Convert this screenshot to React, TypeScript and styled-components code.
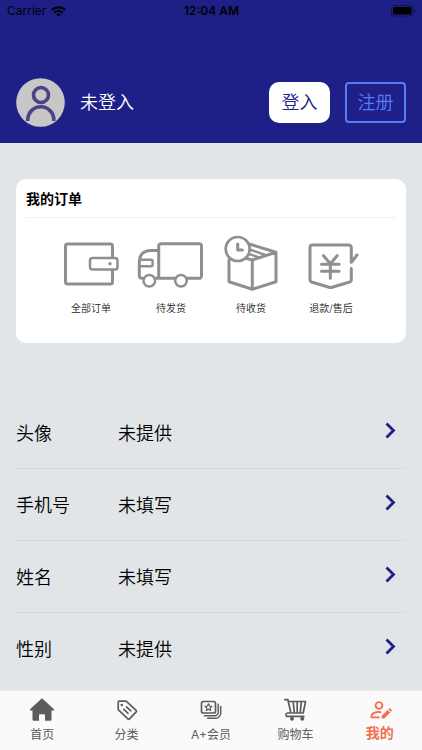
import React from "react";
import styled, { createGlobalStyle } from "styled-components";

const color = {
  navy: "#1e2088",
  link: "#5b7cf7",
  page: "#e1e5e8",
  line: "#d7dadd",
  icon: "#8f8f8f",
  tab: "#5c5c5c",
  accent: "#f56d4e",
};

const GlobalStyle = createGlobalStyle`
  *, *::before, *::after { box-sizing: border-box; }
  body {
    margin: 0;
    background: ${color.page};
    color: #000;
    font-family: Inter, "Noto Sans CJK SC", sans-serif;
    font-weight: 350;
  }
  button { font-family: inherit; font-weight: inherit; }
`;

const Screen = styled.div`
  display: flex;
  flex-direction: column;
  height: 100vh;
`;

const Header = styled.header`
  flex: none;
  background: ${color.navy};
  padding-bottom: 16px;
`;

const StatusBar = styled.div`
  display: grid;
  grid-template-columns: 1fr auto 1fr;
  align-items: center;
  height: 22px;
  padding: 0 6px 0 7px;
  font-size: 12px;
  font-weight: 400;
  line-height: 22px;
`;

const Carrier = styled.span`
  display: flex;
  align-items: center;
  gap: 5px;
`;

const Clock = styled.time`
  font-weight: 600;
`;

const Battery = styled.span`
  display: flex;
  justify-content: flex-end;
`;

const Profile = styled.div`
  display: flex;
  align-items: center;
  gap: 15px;
  margin-top: 56px;
  padding: 0 16px;
`;

const UserName = styled.h1`
  flex: 1;
  margin: 0;
  color: #fff;
  font-size: 18px;
  font-weight: 350;
  line-height: 24px;
`;

const AuthButton = styled.button<{ $outlined?: boolean }>`
  width: 61px;
  height: 41px;
  padding: 0;
  border: 2px solid ${(p) => (p.$outlined ? color.link : "#fff")};
  border-radius: ${(p) => (p.$outlined ? 4 : 10)}px;
  background: ${(p) => (p.$outlined ? "transparent" : "#fff")};
  color: ${(p) => (p.$outlined ? color.link : color.navy)};
  font-size: 18px;
  line-height: 24px;
`;

const Content = styled.main`
  flex: 1;
  min-height: 0;
  overflow-y: auto;
  padding: 36px 16px 0;
`;

const Card = styled.section`
  padding: 8px 10px 27px;
  border-radius: 10px;
  background: #fff;
`;

const CardTitle = styled.h2`
  margin: 0;
  padding-bottom: 6px;
  border-bottom: 1px solid #f0f0f0;
  font-size: 14px;
  font-weight: 700;
  line-height: 24px;
`;

const Orders = styled.div`
  display: grid;
  grid-template-columns: repeat(4, 80px);
  justify-content: center;
  padding-top: 14px;
`;

const OrderButton = styled.button`
  display: flex;
  flex-direction: column;
  align-items: center;
  gap: 8px;
  padding: 0;
  border: 0;
  background: none;
  color: #222;
  font-size: 10px;
  line-height: 16px;
`;

const Details = styled.div`
  margin-top: 54px;
`;

const DetailRow = styled.button`
  display: flex;
  align-items: center;
  width: 100%;
  height: 72px;
  padding: 2px 10px 0 0;
  border: 0;
  border-bottom: 1px solid ${color.line};
  background: none;
  color: #000;
  font-size: 18px;
  line-height: 24px;
  text-align: left;

  &:last-child { border-bottom-color: transparent; }
`;

const DetailName = styled.span`
  width: 102px;
`;

const DetailValue = styled.span`
  flex: 1;
`;

const ChevronBox = styled.span`
  display: flex;
  padding-bottom: 6px;
`;

const TabBar = styled.nav`
  flex: none;
  display: grid;
  grid-template-columns: repeat(5, 1fr);
  height: 60px;
  border-top: 1px solid #ececee;
  background: #fafafa;
`;

const Tab = styled.a<{ $active?: boolean }>`
  display: flex;
  flex-direction: column;
  align-items: center;
  gap: 2px;
  padding-top: 6px;
  color: ${(p) => (p.$active ? color.accent : color.tab)};
  font-size: ${(p) => (p.$active ? 14 : 12)}px;
  font-weight: ${(p) => (p.$active ? 700 : 400)};
  line-height: ${(p) => (p.$active ? 16 : 20)}px;
  text-decoration: none;
`;

function WifiIcon() {
  return (
    <svg width="15" height="11" viewBox="0 0 15 11" fill="none" stroke="#000" aria-hidden="true">
      <path d="M.8 4.1a9.7 9.7 0 0 1 13.4 0" strokeWidth="2.1" />
      <path d="M3.3 6.7a6 6 0 0 1 8.4 0" strokeWidth="1.9" />
      <path d="M7.5 10.6 5.2 8.4a3.2 3.2 0 0 1 4.6 0z" fill="#000" stroke="none" />
    </svg>
  );
}

function BatteryIcon() {
  return (
    <svg width="25" height="12" viewBox="0 0 25 12" aria-hidden="true">
      <rect x=".5" y=".5" width="21.5" height="10.5" rx="3" fill="none" stroke="#000" strokeOpacity=".4" />
      <rect x="2" y="2" width="18.5" height="7.5" rx="1.6" />
      <path d="M23.3 3.8c1.6.6 1.6 3.4 0 4z" fillOpacity=".5" />
    </svg>
  );
}

function Avatar() {
  return (
    <svg width="49" height="49" viewBox="0 0 49 49" fill="none" aria-hidden="true">
      <circle cx="24.5" cy="24.5" r="24.3" fill="#c8c7c7" />
      <circle cx="25" cy="17" r="7.5" stroke="#4b4385" strokeWidth="3.6" />
      <path d="M11.8 43v-1.2a13 13 0 0 1 26 0V43" stroke="#4b4385" strokeWidth="3.6" />
    </svg>
  );
}

function OrderIcon({ children }: { children: React.ReactNode }) {
  return (
    <svg
      width="72"
      height="60"
      viewBox="0 0 72 60"
      fill="none"
      stroke={color.icon}
      strokeWidth="3"
      strokeLinejoin="round"
      strokeLinecap="round"
      aria-hidden="true"
    >
      {children}
    </svg>
  );
}

const orders = [
  {
    label: "全部订单",
    art: (
      <>
        <path d="M57.5 25.5V14a2 2 0 0 0-2-2H12.5a2 2 0 0 0-2 2v36a2 2 0 0 0 2 2h43a2 2 0 0 0 2-2V38.5" />
        <rect x="35" y="26" width="27.5" height="11.5" rx="2.5" strokeWidth="2.5" />
        <circle cx="55" cy="31.8" r="1.7" fill={color.icon} stroke="none" />
      </>
    ),
  },
  {
    label: "待发货",
    art: (
      <>
        <path d="M20.5 46.3h19M52.5 46.3H64a2.5 2.5 0 0 0 2.5-2.5V14.2a2.5 2.5 0 0 0-2.5-2.5H26.2a2.5 2.5 0 0 0-2.5 2.5v32" />
        <path d="M23.7 18.5H15.5C8.5 18.5 4.3 23 4.3 29.5V44a2.3 2.3 0 0 0 2.3 2.3H8" />
        <path d="M5 27.8h11a1.6 1.6 0 0 1 1.6 1.6v3.3a1.6 1.6 0 0 1-1.6 1.6H5" strokeWidth="2.4" />
        <circle cx="14.3" cy="48.7" r="5.8" strokeWidth="2.5" />
        <circle cx="46" cy="48.7" r="5.8" strokeWidth="2.5" />
      </>
    ),
  },
  {
    label: "待收货",
    art: (
      <>
        <path d="M14 28v21.700l23.300 7.600L61 49.700V20.300L37.300 28v29.300M37.300 28 29 25.800M35.300 12.300 61 20.300" />
        <path d="m34.800 17.500 14.700 5.200M32.500 21.600l12.500 4" strokeWidth="2.4" />
        <circle cx="22.7" cy="17" r="12" strokeWidth="2.7" fill="#fff" />
        <path d="M22.700 12v6h4.700" />
      </>
    ),
  },
  {
    label: "退款/售后",
    art: (
      <>
        <path d="M56.300 36.500V48q0 1.500-1.500 2L37 55.300q-1.500.5-3 0L16.500 50Q15 49.500 15 48V15.500A2.500 2.500 0 0 1 17.500 13h36.300a2.500 2.500 0 0 1 2.500 2.500v14.800L62 23" />
        <path d="m28.500 23.700 6.800 8 6.800-8M35.300 31.700v14.600M26.500 32.300h17.600M26.500 39.300h17.600" />
      </>
    ),
  },
];

const details = [
  { name: "头像", value: "未提供" },
  { name: "手机号", value: "未填写" },
  { name: "姓名", value: "未填写" },
  { name: "性别", value: "未提供" },
];

function Chevron() {
  return (
    <svg width="11" height="17" viewBox="0 0 11 17" fill="none" stroke={color.navy} strokeWidth="2.8" aria-hidden="true">
      <path d="m1.500 1.500 7 7-7 7" />
    </svg>
  );
}

function TabIcon({ children }: { children: React.ReactNode }) {
  return (
    <svg
      width="26"
      height="26"
      viewBox="0 0 26 26"
      fill="none"
      stroke="currentColor"
      strokeWidth="1.7"
      strokeLinejoin="round"
      strokeLinecap="round"
      aria-hidden="true"
    >
      {children}
    </svg>
  );
}

const tabs = [
  {
    label: "首页",
    art: (
      <path
        d="M13 1.200 25 12.300q.5.900-.5 1.100H22.500v9.300q0 1-1 1h-5.500v-5.700q0-.8-.8-.8h-4.400q-.8 0-.8.8v5.700H4.500q-1 0-1-1v-9.300H1.500q-1-.2-.5-1.100z"
        fill="currentColor"
        stroke="none"
      />
    ),
  },
  {
    label: "分类",
    art: (
      <>
        <path d="M4.200 5.200q0-1 1-1h6.300q.7 0 1.200.5l9.400 8.600q.8.8.1 1.600l-6.700 7q-.8.8-1.600 0L4.700 13.200q-.5-.5-.5-1.200z" />
        <circle cx="7.800" cy="8" r="1.3" fill="currentColor" stroke="none" />
        <path d="m12.500 9.800 4.300 4M9.800 12.300l4.300 4" strokeWidth="1.6" />
      </>
    ),
  },
  {
    label: "A+会员",
    art: (
      <>
        <rect x="3.5" y="4.5" width="14" height="11.5" rx="1.8" />
        <path d="m10.500 6.800 1.100 2.200 2.400.3-1.800 1.700.4 2.400-2.100-1.200-2.100 1.200.4-2.400L7 9.300 9.400 9z" strokeWidth="1.2" />
        <path d="M6.500 18.700h10.200a3.500 3.500 0 0 0 3.500-3.500V7.300M9.700 21.300h8a5 5 0 0 0 5-5V9.500" strokeWidth="1.5" />
      </>
    ),
  },
  {
    label: "购物车",
    art: (
      <>
        <path d="M2.700 2.700h3.200l3 13.300M6.500 4.500h17l-2.300 11.500H5.700a1.700 1.700 0 0 0 0 3.400h16.100M11.200 4.700l1.100 11M15.200 4.700v11M19.300 4.700l-1.100 11" />
        <circle cx="10" cy="21.8" r="2" fill="currentColor" stroke="none" />
        <circle cx="20.3" cy="21.8" r="2" fill="currentColor" stroke="none" />
      </>
    ),
  },
  {
    label: "我的",
    active: true,
    art: (
      <>
        <circle cx="12" cy="8.5" r="3.4" strokeWidth="1.9" />
        <path d="M13.500 15.200C8.500 14.500 4.500 16.300 4.500 18.800v1.600h7.300" strokeWidth="1.9" />
        <path d="M14.700 21.400v-2.600l5.900-5.900 2.600 2.600-5.900 5.900zM21.300 12.200l.8-.8q.5-.5 1 0l1.600 1.600q.5.5 0 1l-.8.8z" fill="currentColor" stroke="none" />
      </>
    ),
  },
];

export default function App() {
  return (
    <>
      <GlobalStyle />
      <Screen>
        <Header>
          <StatusBar>
            <Carrier>
              Carrier
              <WifiIcon />
            </Carrier>
            <Clock>12:04 AM</Clock>
            <Battery>
              <BatteryIcon />
            </Battery>
          </StatusBar>
          <Profile>
            <Avatar />
            <UserName>未登入</UserName>
            <AuthButton type="button">登入</AuthButton>
            <AuthButton type="button" $outlined>
              注册
            </AuthButton>
          </Profile>
        </Header>
        <Content>
          <Card>
            <CardTitle>我的订单</CardTitle>
            <Orders>
              {orders.map((order) => (
                <OrderButton type="button" key={order.label}>
                  <OrderIcon>{order.art}</OrderIcon>
                  {order.label}
                </OrderButton>
              ))}
            </Orders>
          </Card>
          <Details>
            {details.map((detail) => (
              <DetailRow type="button" key={detail.name}>
                <DetailName>{detail.name}</DetailName>
                <DetailValue>{detail.value}</DetailValue>
                <ChevronBox>
                  <Chevron />
                </ChevronBox>
              </DetailRow>
            ))}
          </Details>
        </Content>
        <TabBar>
          {tabs.map((tab) => (
            <Tab href="#" key={tab.label} $active={tab.active} aria-current={tab.active ? "page" : undefined}>
              <TabIcon>{tab.art}</TabIcon>
              {tab.label}
            </Tab>
          ))}
        </TabBar>
      </Screen>
    </>
  );
}
